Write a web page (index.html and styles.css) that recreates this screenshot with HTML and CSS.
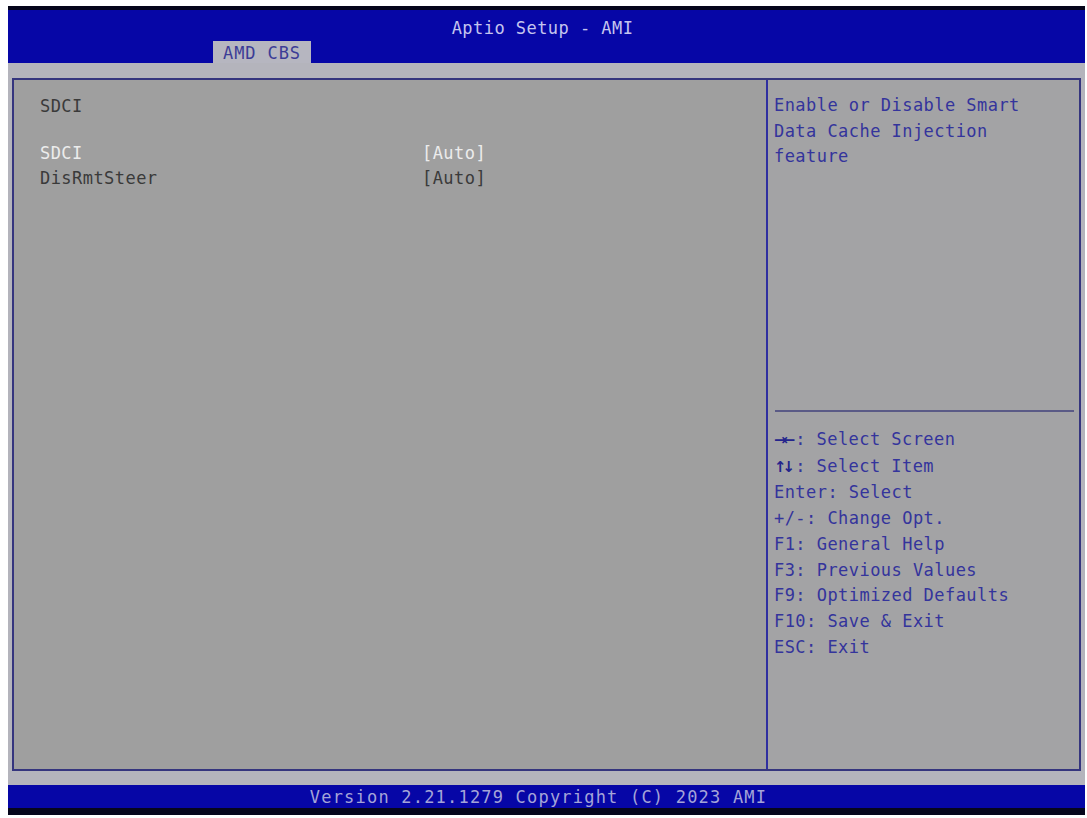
FILE: index.html
```html
<!DOCTYPE html>
<html lang="en">
<head>
    <meta charset="UTF-8">
    <meta name="viewport" content="width=device-width, initial-scale=1.0">
    <title>Aptio Setup - AMI</title>
    <link rel="stylesheet" href="styles.css">
</head>
<body>
    <div class="screen">
        <div class="topbar">
            <div class="title">Aptio Setup - AMI</div>
            <div class="tabs">
                <span class="tab">AMD CBS</span>
            </div>
        </div>
        <div class="band">
            <div class="panel">
                <div class="menu">
                    <div class="heading">SDCI</div>
                    <div class="items">
                        <div class="item selected">
                            <span class="label">SDCI</span>
                            <span class="value">[Auto]</span>
                        </div>
                        <div class="item">
                            <span class="label">DisRmtSteer</span>
                            <span class="value">[Auto]</span>
                        </div>
                    </div>
                </div>
                <div class="side">
                    <div class="desc">Enable or Disable Smart<br>Data Cache Injection<br>feature</div>
                    <div class="rule"></div>
                    <div class="keys">
                        <div><span class="arr">&rarr;&larr;</span>: Select Screen</div>
                        <div><span class="arr">&uarr;&darr;</span>: Select Item</div>
                        <div>Enter: Select</div>
                        <div>+/-: Change Opt.</div>
                        <div>F1: General Help</div>
                        <div>F3: Previous Values</div>
                        <div>F9: Optimized Defaults</div>
                        <div>F10: Save &amp; Exit</div>
                        <div>ESC: Exit</div>
                    </div>
                </div>
            </div>
        </div>
        <div class="footer">Version 2.21.1279 Copyright (C) 2023 AMI</div>
    </div>
</body>
</html>
```

FILE: styles.css
```css
* {
    margin: 0;
    padding: 0;
    box-sizing: border-box;
}

body {
    background: #fff;
    font-family: "DejaVu Sans Mono", "Liberation Mono", monospace;
    font-size: 17px;
    letter-spacing: 0.45px;
    overflow: hidden;
}

.screen {
    margin: 6px 2px 0 8px;
    width: 1077px;
    height: 809px;
    display: flex;
    flex-direction: column;
}

.topbar {
    height: 57px;
    border-top: 4px solid #05051a;
    background: #0606a6;
    display: flex;
    flex-direction: column;
    align-items: center;
}

.title {
    color: #c4c4ee;
    line-height: 26px;
    margin-top: 5px;
    padding-right: 8px;
}

.tabs {
    align-self: stretch;
    padding-left: 205px;
}

.tab {
    display: inline-block;
    background: #b6b6c0;
    color: #3c3c96;
    height: 22px;
    line-height: 25px;
    width: 98px;
    text-align: center;
    letter-spacing: 0.9px;
}

.band {
    flex: 1;
    background: #b4b4bc;
    padding: 15px 4px 14px 4px;
    display: flex;
}

.panel {
    flex: 1;
    display: flex;
    border: 2px solid #35357e;
    background: #9f9f9f;
    line-height: 25.7px;
}

.menu {
    width: 754px;
    padding: 14px 0 0 26px;
    color: #3a3a3a;
    border-right: 2px solid #2f2fa0;
}

.items {
    margin-top: 21px;
}

.item {
    display: grid;
    grid-template-columns: 382px 1fr;
}

.item.selected {
    color: #ececec;
}

.side {
    flex: 1;
    display: flex;
    flex-direction: column;
    background: #a3a3a5;
    color: #34349c;
}

.desc {
    height: 330px;
    padding: 13px 0 0 6px;
}

.rule {
    height: 2px;
    margin: 0 5px 0 7px;
    background: #5a5a86;
}

.keys {
    padding: 15px 0 0 6px;
}

.arr {
    font-family: "DejaVu Sans", sans-serif;
    font-weight: bold;
    font-size: 15px;
    letter-spacing: -4px;
    color: #24248c;
    margin-right: 4px;
}

.footer {
    height: 30px;
    background: #0606a6;
    border-bottom: 7px solid #06061c;
    color: #a4a4d8;
    text-align: center;
    line-height: 24px;
    letter-spacing: 1.2px;
    padding-right: 16px;
}
```
